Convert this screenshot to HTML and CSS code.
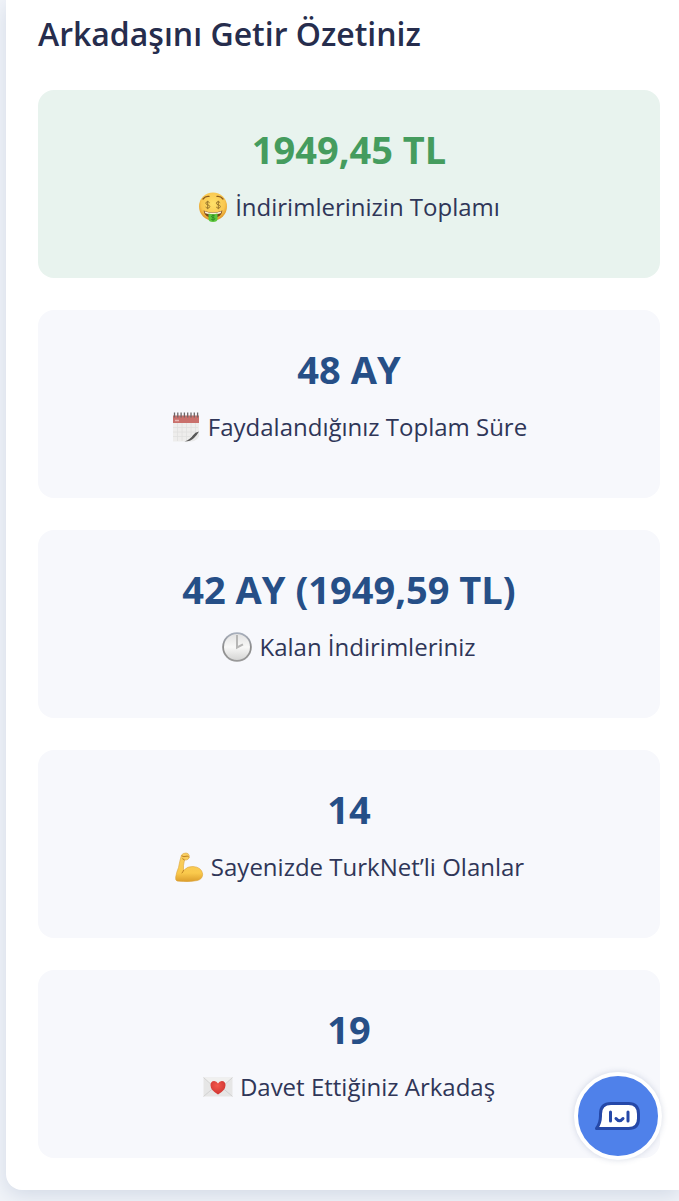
FILE: index.html
```html
<!DOCTYPE html>
<html lang="tr">
<head>
    <meta charset="UTF-8">
    <meta name="viewport" content="width=device-width, initial-scale=1.0">
    <title>Arkadaşını Getir</title>
    <link rel="stylesheet" href="styles.css">
</head>
<body>
    <main class="panel">
        <h1>Arkadaşını Getir Özetiniz</h1>
        <div class="cards">
            <section class="card card-green">
                <p class="value">1949,45 TL</p>
                <p class="label">
                    <svg class="icon" viewBox="0 0 30 30" aria-hidden="true">
                        <defs>
                            <radialGradient id="face" cx="50%" cy="40%" r="60%">
                                <stop offset="0" stop-color="#ffe169"/>
                                <stop offset="0.7" stop-color="#f9c750"/>
                                <stop offset="1" stop-color="#dd9225"/>
                            </radialGradient>
                        </defs>
                        <circle cx="15" cy="14.5" r="14" fill="url(#face)"/>
                        <path d="M5 7q2.500-3.200 6-2.600M19 4.400q3.500-.6 6 2.600" fill="none" stroke="#8b5a1d" stroke-width="1.300" stroke-linecap="round"/>
                        <path d="M5.500 18.500q9.500 4 19 0-1.500 7.500-9.500 7.500t-9.500-7.500z" fill="#7a4518"/>
                        <path d="M6.500 19.200q8.500 3 17 0l-.8 2q-7.700 2.600-15.400 0z" fill="#fff6dc"/>
                        <path d="M10.500 21.600q4.500 1.300 9 0V27q0 3-4.500 3t-4.500-3z" fill="#5cc63c"/>
                        <path d="M16.800 23.800q-3.400-.8-3.400.6c0 1.500 3.400.7 3.400 2.200 0 1.500-2 1.400-3.600.7M15 22.500v6.300" fill="none" stroke="#2c8724" stroke-width=".9"/>
                        <g fill="none" stroke="#98752c" stroke-width="1">
                            <path d="M11.600 10.800c-1-1.500-3.800-1.400-3.800.4 0 2.200 4 1.200 4 3.300 0 2-3.200 2-4.200.5M9.700 8.800v8.400"/>
                            <path d="M22.200 10.800c-1-1.500-3.800-1.400-3.800.4 0 2.200 4 1.200 4 3.300 0 2-3.200 2-4.200.5M20.300 8.800v8.400"/>
                        </g>
                    </svg>
                    <span>İndirimlerinizin Toplamı</span>
                </p>
            </section>

            <section class="card">
                <p class="value">48 AY</p>
                <p class="label">
                    <svg class="icon" viewBox="0 0 30 30" aria-hidden="true">
                        <path d="M2 3.500h26v17L17 29.500H2z" fill="#eeedec"/>
                        <path d="M2 3.500h26v7.500H2z" fill="#c9706c"/>
                        <path d="M4 8.500h4" stroke="#e8b5b2" stroke-width="1.500"/>
                        <path d="M2 15.500h25M2 20h23M2 24.500h18M6.500 11v18M11 11v18M15.500 11v18M20 11v13M24.500 11v10" stroke="#e0e0df" stroke-width=".8"/>
                        <path d="M28 19.500v5q-1.500 3.500-5 4.500-3 .5-8 .5z" fill="#e9e9e9"/>
                        <path d="M28 19.500q-4 .8-6 3.800-3 4.500-8.500 6.200 6 0 9.500-3.500 3-3 5-6.500z" fill="#585858"/>
                        <path d="M3.500.5v5M6.800.5v5M10.100.5v5M13.400.5v5M16.700.5v5M20 .5v5M23.300.5v5M26.600.5v5" stroke="#6f6668" stroke-width="1.300"/>
                    </svg>
                    <span>Faydalandığınız Toplam Süre</span>
                </p>
            </section>

            <section class="card">
                <p class="value">42 AY (1949,59 TL)</p>
                <p class="label">
                    <svg class="icon" viewBox="0 0 30 30" aria-hidden="true">
                        <defs>
                            <linearGradient id="rim" x1="0" y1="0" x2="0" y2="1">
                                <stop offset="0" stop-color="#a9b1bf"/>
                                <stop offset="0.500" stop-color="#8b8b8b"/>
                                <stop offset="1" stop-color="#9a9a9a"/>
                            </linearGradient>
                            <linearGradient id="dial" x1="0" y1="0" x2="0" y2="1">
                                <stop offset="0" stop-color="#e2e2e2"/>
                                <stop offset="0.500" stop-color="#f8f8f7"/>
                                <stop offset="1" stop-color="#d5d5d4"/>
                            </linearGradient>
                        </defs>
                        <circle cx="15" cy="15" r="14.800" fill="url(#rim)"/>
                        <circle cx="15" cy="15" r="13" fill="url(#dial)"/>
                        <path d="M15 3v12.500l6-3.200" fill="none" stroke="#b6b6b5" stroke-width="2"/>
                    </svg>
                    <span>Kalan İndirimleriniz</span>
                </p>
            </section>

            <section class="card">
                <p class="value">14</p>
                <p class="label">
                    <svg class="icon" viewBox="0 0 30 30" aria-hidden="true">
                        <defs>
                            <linearGradient id="arm" x1="0" y1="0" x2="0" y2="1">
                                <stop offset="0" stop-color="#f8cf62"/>
                                <stop offset="0.700" stop-color="#fac94c"/>
                                <stop offset="1" stop-color="#dc9d2b"/>
                            </linearGradient>
                        </defs>
                        <path d="M7.500 3Q9 1 12 1q2.500 0 3.200 2.500.6 2.200-1.200 3.800-1.700 1-3.500.7-1.500 5.500-1 10.500 4-4.500 9.500-4 8.500.5 9.700 7.500 0 5-5.200 6.500-7 1.500-14 1-4.500-.1-6.500-.5-1.700-.5-1.300-4 .8-5 2.800-9.500 1-6 3-12.500z" fill="url(#arm)" stroke="#dba43c" stroke-width=".6"/>
                        <path d="M8 4q2 1.300 4 .3t2.700.7M10.300 7.800l-1.600-1M9.500 18.500q-.5 1.500-1.500 2.500" fill="none" stroke="#bd7e22" stroke-width="1" stroke-linecap="round"/>
                    </svg>
                    <span>Sayenizde TurkNet’li Olanlar</span>
                </p>
            </section>

            <section class="card">
                <p class="value">19</p>
                <p class="label">
                    <svg class="icon" viewBox="0 0 30 30" aria-hidden="true">
                        <defs>
                            <radialGradient id="heart" cx="45%" cy="35%" r="65%">
                                <stop offset="0" stop-color="#f2584d"/>
                                <stop offset="1" stop-color="#cf3431"/>
                            </radialGradient>
                        </defs>
                        <path d="M.5 5.500h29v19H.5z" fill="#e6e6e6"/>
                        <path d="M.5 5.500h29L15 18.500z" fill="#f0f0ef"/>
                        <path d="M.5 5.500L15 18.500l14.500-13M.5 24.500L11 15.500M29.500 24.500L19 15.500" fill="none" stroke="#cccccb" stroke-width=".8"/>
                        <path d="M15 22.500q-7.500-4.200-7.500-9.200 0-4.300 3.700-4.400 2.500 0 3.800 2.500 1.300-2.500 3.800-2.500 3.700.1 3.700 4.400 0 5-7.500 9.200z" fill="url(#heart)"/>
                    </svg>
                    <span>Davet Ettiğiniz Arkadaş</span>
                </p>
            </section>
        </div>
    </main>

    <button class="chat" type="button" aria-label="Canlı destek">
        <svg viewBox="0 0 46 30" aria-hidden="true">
            <path d="M1.500 27.500Q5.500 22 5.500 15v-2Q5.500 2.500 16 2.500h17.500q10 0 10 10.500v4.500q0 10-10 10z" fill="#fff" stroke="#2548a8" stroke-width="3" stroke-linejoin="round"/>
            <path d="M15.500 11v9M33 11v9M21 17.500q3.500 4.500 7 0" fill="none" stroke="#2548a8" stroke-width="3" stroke-linecap="round"/>
        </svg>
    </button>
</body>
</html>
```
FILE: styles.css
```css
* {
    box-sizing: border-box;
}
body {
    margin: 0;
    padding: 0 0 11px 6px;
    background-color: #f1f4f9;
    font-family: "Open Sans", "Noto Sans", sans-serif;
    color: #262d4d;
}
.panel {
    padding: 12px 19px 32px 32px;
    background-color: #fff;
    border-radius: 0 0 0 16px;
    box-shadow: 0 6px 20px #d3dae6;
}
h1 {
    margin: 0 0 34px;
    font-size: 32px;
    font-weight: 600;
    line-height: 44px;
}
.cards {
    display: grid;
    gap: 32px;
}
.card {
    padding: 32px 16px 52px;
    background-color: #f7f8fc;
    border-radius: 16px;
    text-align: center;
}
.card-green {
    background-color: #e8f3ee;
}
.value {
    margin: 0 0 12px;
    font-size: 38px;
    font-weight: 700;
    line-height: 54px;
    color: #264f87;
}
.card-green .value {
    color: #459c5e;
}
.label {
    display: flex;
    align-items: center;
    justify-content: center;
    gap: 7px;
    margin: 0;
    font-size: 24px;
    line-height: 38px;
    color: #2f3658;
}
.icon {
    width: 30px;
    height: 30px;
    flex: none;
}
.chat {
    position: fixed;
    right: 17px;
    bottom: 41px;
    display: flex;
    align-items: center;
    justify-content: center;
    width: 88px;
    height: 88px;
    padding: 0;
    border: 4px solid #fff;
    border-radius: 50%;
    background-color: #4f81ea;
    box-shadow: 0 0 6px rgba(60, 80, 130, 0.2);
    cursor: pointer;
}
.chat svg {
    width: 46px;
    height: 30px;
}
```
